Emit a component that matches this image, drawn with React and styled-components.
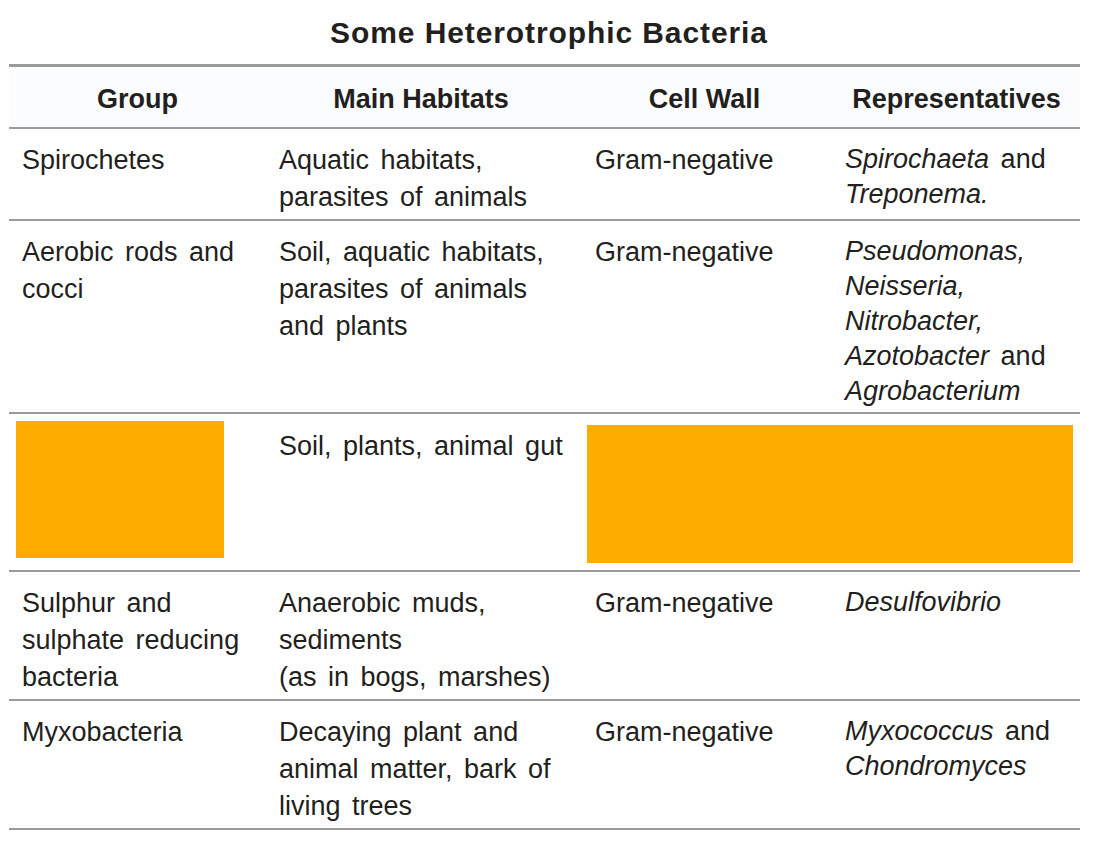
import styled, {createGlobalStyle} from 'styled-components';

const GlobalStyle = createGlobalStyle`
  body {
    margin: 0;
    background: #ffffff;
    color: #231f20;
    font-family: 'Liberation Sans', Arial, sans-serif;
  }
`;

const COLS = '257px 310px 257px 247px';

const Page = styled.div`
  width: 1071px;
  padding-left: 9px;
`;

const Title = styled.h1`
  margin: 0;
  height: 64px;
  line-height: 66px;
  padding-left: 9px;
  text-align: center;
  font-size: 30px;
  font-weight: 700;
  letter-spacing: 0.9px;
`;

const Table = styled.div`
  border-top: 3px solid #9a9a9a;
`;

const HeadRow = styled.div`
  display: grid;
  grid-template-columns: ${COLS};
  height: 60px;
  align-items: center;
  background: #fbfcfe;
  border-bottom: 2px solid #9b9b9b;
`;

const HeadCell = styled.div`
  text-align: center;
  font-size: 27px;
  font-weight: 700;
  padding-top: 4px;
`;

const Row = styled.div`
  display: grid;
  grid-template-columns: ${COLS};
  border-bottom: 2px solid #9b9b9b;
`;

const Cell = styled.div`
  padding: ${p => p.$top ?? 13}px 6px 3px ${p => p.$indent}px;
  font-size: 27px;
  line-height: ${p => (p.$italic ? 35 : 37)}px;
  font-style: ${p => (p.$italic ? 'italic' : 'normal')};
  word-spacing: 4px;
  white-space: nowrap;
`;

const Plain = styled.span`
  font-style: normal;
`;

const Redaction = styled.div`
  background: #ffab00;
  width: ${p => p.$w}px;
  height: ${p => p.$h}px;
  margin: ${p => p.$m};
  grid-column: ${p => p.$span || 'auto'};
`;

const headers = ['Group', 'Main Habitats', 'Cell Wall', 'Representatives'];
const indents = [13, 13, 19, 12];

const rows = [
  {
    group: ['Spirochetes'],
    habitat: ['Aquatic habitats,', 'parasites of animals'],
    wall: 'Gram-negative',
    reps: [
      <>Spirochaeta <Plain>and</Plain></>,
      'Treponema.',
    ],
  },
  {
    group: ['Aerobic rods and', 'cocci'],
    habitat: ['Soil, aquatic habitats,', 'parasites of animals', 'and plants'],
    wall: 'Gram-negative',
    reps: [
      'Pseudomonas,',
      'Neisseria,',
      'Nitrobacter,',
      <>Azotobacter <Plain>and</Plain></>,
      'Agrobacterium',
    ],
  },
  {redacted: true, habitat: ['Soil, plants, animal gut']},
  {
    group: ['Sulphur and', 'sulphate reducing', 'bacteria'],
    habitat: ['Anaerobic muds,', 'sediments', '(as in bogs, marshes)'],
    wall: 'Gram-negative',
    reps: ['Desulfovibrio'],
  },
  {
    group: ['Myxobacteria'],
    habitat: ['Decaying plant and', 'animal matter, bark of', 'living trees'],
    wall: 'Gram-negative',
    reps: [
      <>Myxococcus <Plain>and</Plain></>,
      'Chondromyces',
    ],
  },
];

const Lines = ({items}) =>
  items.map((line, i) => <div key={i}>{line}</div>);

export default function App() {
  return (
    <Page>
      <GlobalStyle />
      <Title>Some Heterotrophic Bacteria</Title>
      <Table>
        <HeadRow>
          {headers.map(h => (
            <HeadCell key={h}>{h}</HeadCell>
          ))}
        </HeadRow>
        {rows.map((r, i) =>
          r.redacted ? (
            <Row key={i}>
              <Redaction $w={208} $h={137} $m="7px 0 0 7px" />
              <Cell $indent={indents[1]} $top={14}>
                <Lines items={r.habitat} />
              </Cell>
              <Redaction $w={486} $h={138} $m="11px 0 7px 11px" $span="span 2" />
            </Row>
          ) : (
            <Row key={i}>
              <Cell $indent={indents[0]}>
                <Lines items={r.group} />
              </Cell>
              <Cell $indent={indents[1]}>
                <Lines items={r.habitat} />
              </Cell>
              <Cell $indent={indents[2]}>{r.wall}</Cell>
              <Cell $indent={indents[3]} $italic>
                <Lines items={r.reps} />
              </Cell>
            </Row>
          )
        )}
      </Table>
    </Page>
  );
}
